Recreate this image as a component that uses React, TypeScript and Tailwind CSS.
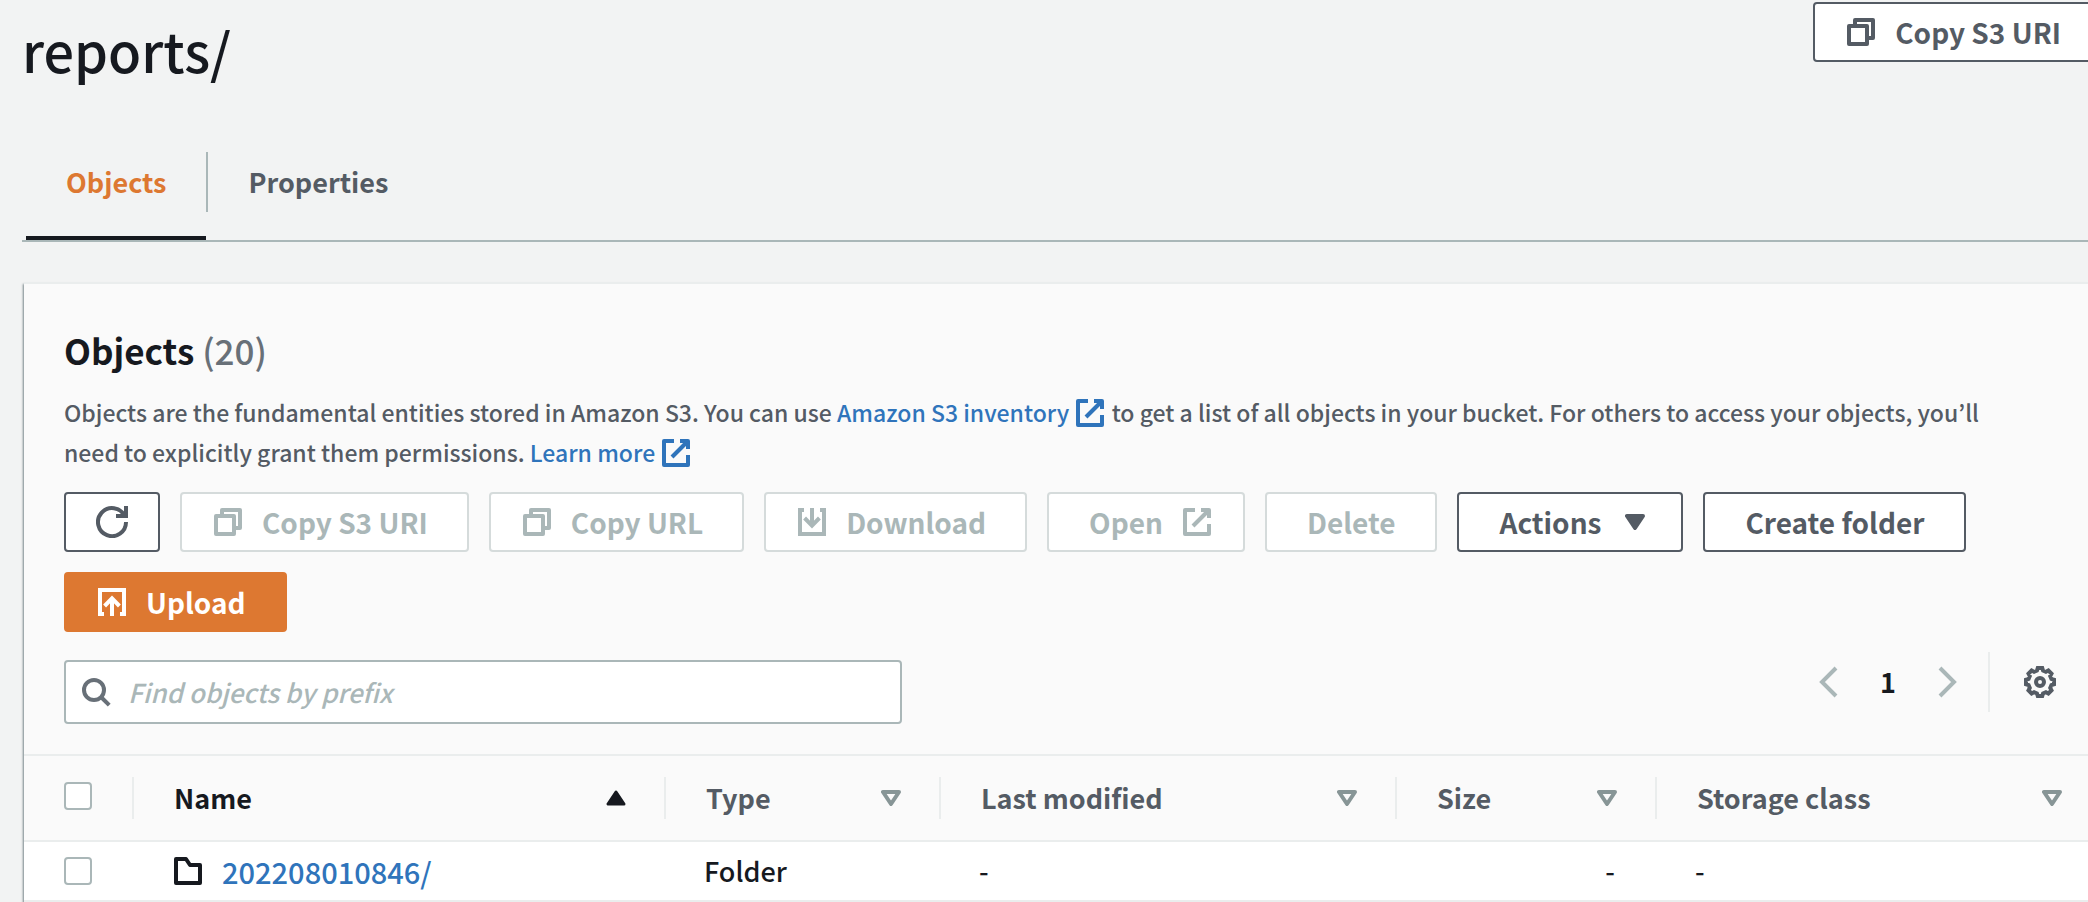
import React from "react";

type IconName = "copy" | "external" | "download" | "upload" | "refresh" | "search" | "prev" | "next" | "folder";

const iconPaths: Record<IconName, string[]> = {
  copy: ["M2 5h9v9H2z", "M5 5V2h9v9h-3"],
  external: ["M10 2h4v4", "M6 10l8-8", "M14 9v5H2V2h5"],
  download: ["M4 2H2v12h12V2h-2", "M8 1v9", "M4.3 6 8 9.8 11.7 6"],
  upload: ["M4 14H2V2h12v12h-2", "M8 15V6", "M4.3 10 8 6.2l3.7 3.8"],
  refresh: ["M10 5h5V0", "M15 8a7 7 0 1 1-.7-3"],
  search: ["M12 7A5 5 0 1 1 2 7a5 5 0 0 1 10 0z", "M10.5 10.5 14.6 14.6"],
  prev: ["M12 1 5 8l7 7"],
  next: ["M4 1l7 7-7 7"],
  folder: ["M2 2h5l2 3h5v9H2z"],
};

function Icon({ name, className = "" }: { name: IconName; className?: string }) {
  const round = name === "copy" || name === "folder" || name === "external";
  return (
    <svg
      viewBox="0 0 16 16"
      aria-hidden="true"
      fill="none"
      stroke="currentColor"
      strokeWidth="2"
      strokeLinejoin={round ? "round" : "miter"}
      className={`size-8 shrink-0 ${className}`}
    >
      {iconPaths[name].map((d) => (
        <path key={d} d={d} />
      ))}
    </svg>
  );
}

function Caret({ kind }: { kind: "menu" | "asc" | "none" }) {
  return (
    <svg viewBox="0 0 20 16" aria-hidden="true" strokeLinejoin="round" className="h-4 w-5 shrink-0">
      {kind === "menu" && <path d="M2 2h16l-8 12z" fill="currentColor" stroke="currentColor" strokeWidth="4" />}
      {kind === "asc" && <path d="M2 14h16L10 2z" fill="currentColor" stroke="currentColor" strokeWidth="3" />}
      {kind === "none" && <path d="M2 2h16l-8 12z" fill="none" stroke="#879596" strokeWidth="4" />}
    </svg>
  );
}

// Eight teeth, each a tip edge followed by a valley edge.
const gearPoints = Array.from({ length: 8 }, (_, i) => {
  const corner = (deg: number, r: number) => {
    const a = ((i * 45 + deg) * Math.PI) / 180;
    return `${(16 + r * Math.sin(a)).toFixed(2)},${(16 - r * Math.cos(a)).toFixed(2)}`;
  };
  return [corner(-9, 14.2), corner(9, 14.2), corner(15, 11.8), corner(30, 11.8)].join(" ");
}).join(" ");

function Gear() {
  return (
    <svg viewBox="0 0 32 32" aria-hidden="true" fill="none" stroke="currentColor" strokeWidth="4" className="size-8">
      <polygon points={gearPoints} />
      <circle cx="16" cy="16" r="4" />
    </svg>
  );
}

type ButtonProps = {
  children?: React.ReactNode;
  start?: IconName;
  end?: IconName;
  caret?: boolean;
  disabled?: boolean;
  primary?: boolean;
};

function Button({ children, start, end, caret, disabled, primary }: ButtonProps) {
  const tone = primary
    ? "border-[#dd7831] bg-[#dd7831] text-white"
    : disabled
      ? "border-[#d5dbdb] bg-white text-[#aab7b8]"
      : "border-[#545b64] bg-white text-[#545b64]";
  const left = start ? "pl-[30px]" : "pl-10";
  const right = end ? "pr-[30px]" : caret ? "pr-9" : start ? "pr-[39px]" : "pr-10";
  const gap = caret ? "gap-6" : "gap-[18px]";
  return (
    <button
      type="button"
      disabled={disabled}
      className={`flex h-[60px] shrink-0 items-center whitespace-nowrap rounded-sm border-2 text-[28px] leading-10 font-bold ${gap} ${tone} ${left} ${right}`}
    >
      {start && <Icon name={start} />}
      {children}
      {end && <Icon name={end} />}
      {caret && <Caret kind="menu" />}
    </button>
  );
}

const columns = [
  { label: "Name", sort: "asc" as const },
  { label: "Type", sort: "none" as const },
  { label: "Last modified", sort: "none" as const },
  { label: "Size", sort: "none" as const },
  { label: "Storage class", sort: "none" as const },
];

function Checkbox({ label }: { label: string }) {
  return (
    <input
      type="checkbox"
      aria-label={label}
      className="block size-7 appearance-none rounded-sm border-2 border-[#aab7b8] bg-white checked:bg-[#2f74bb]"
    />
  );
}

export default function App() {
  return (
    <div className="min-h-screen overflow-x-hidden bg-[#f2f3f3] font-['Noto_Sans_CJK_KR','Noto_Sans',sans-serif] text-[27px] leading-10 font-medium text-[#16191f]">
      <header className="flex items-start justify-between pt-0.5 pl-[22px]">
        <h1 className="pt-3 text-[54px] leading-[72px]">reports/</h1>
        <div className="-mr-3.5">
          <Button start="copy">Copy S3 URI</Button>
        </div>
      </header>

      <nav className="mt-[66px] ml-[22px] flex border-b-2 border-[#aab7b8] pl-1 font-bold">
        <a href="#objects" className="flex h-[88px] items-start border-b-4 border-[#16191f] px-10 pt-2.5 text-[#dd7831]">
          Objects
        </a>
        <a href="#properties" className="h-[60px] border-l-2 border-[#aab7b8] px-10 pt-2.5 text-[#545b64]">
          Properties
        </a>
      </nav>

      <main className="mt-10 ml-6 border-t-2 border-[#eaeded] bg-[#fafafa] shadow-[-1px_2px_2px_0_rgba(0,28,36,0.5)]">
        <section className="px-10 pt-11">
          <h2 className="text-[35px] leading-[44px] font-bold">
            Objects <span className="font-medium text-[#687078]">(20)</span>
          </h2>
          <p className="mt-5 max-w-[1964px] text-[23px] leading-10 text-[#545b64]">
            Objects are the fundamental entities stored in Amazon S3. You can use{" "}
            <a href="#inventory" className="text-[#2f74bb]">
              Amazon S3 inventory <Icon name="external" className="inline-block align-[-7px]" />
            </a>{" "}
            to get a list of all objects in your bucket. For others to access your objects, you’ll need to explicitly
            grant them permissions.{" "}
            <a href="#learn" className="text-[#2f74bb]">
              Learn more <Icon name="external" className="inline-block align-[-7px]" />
            </a>
          </p>
          <div className="mt-5 flex flex-wrap gap-5">
            <button
              type="button"
              aria-label="Refresh"
              className="flex h-[60px] w-24 items-center justify-center rounded-sm border-2 border-[#545b64] bg-white text-[#545b64]"
            >
              <Icon name="refresh" />
            </button>
            <Button start="copy" disabled>Copy S3 URI</Button>
            <Button start="copy" disabled>Copy URL</Button>
            <Button start="download" disabled>Download</Button>
            <Button end="external" disabled>Open</Button>
            <Button disabled>Delete</Button>
            <Button caret>Actions</Button>
            <Button>Create folder</Button>
            <Button start="upload" primary>Upload</Button>
          </div>
        </section>

        <div className="mt-5 flex items-start justify-between pr-8 pb-[30px] pl-10">
          <label className="mt-2 flex h-16 w-[838px] items-center gap-4 rounded-sm border-2 border-[#aab7b8] bg-white px-3.5">
            <Icon name="search" className="text-[#687078]" />
            <input
              type="text"
              aria-label="Find objects by prefix"
              placeholder="Find objects by prefix"
              className="w-full bg-transparent text-[26px] outline-none placeholder:text-[#aab7b8] placeholder:italic"
            />
          </label>
          <div className="flex h-[60px] items-center">
            <button type="button" aria-label="Previous page" className="text-[#aab7b8]">
              <Icon name="prev" />
            </button>
            <span className="w-[88px] text-center font-bold">1</span>
            <button type="button" aria-label="Next page" className="text-[#aab7b8]">
              <Icon name="next" />
            </button>
            <span className="ml-6 h-[60px] w-0.5 bg-[#eaeded]" />
            <button type="button" aria-label="Preferences" className="ml-[34px] text-[#545b64]">
              <Gear />
            </button>
          </div>
        </div>

        <table className="w-full table-fixed border-collapse">
          <colgroup>
            <col className="w-[108px]" />
            <col className="w-[532px]" />
            <col className="w-[275px]" />
            <col className="w-[456px]" />
            <col className="w-[260px]" />
            <col />
          </colgroup>
          <thead>
            <tr className="h-[86px] border-y-2 border-[#eaeded]">
              <th className="pb-1 pl-10">
                <Checkbox label="Select all objects" />
              </th>
              {columns.map((c) => (
                <th key={c.label} className="p-0 text-left">
                  <div
                    className={`flex h-[42px] items-center justify-between border-l-2 border-[#eaeded] pl-10 ${
                      c.label === "Storage class" ? "pr-[26px]" : "pr-[38px]"
                    } ${c.sort === "asc" ? "" : "text-[#545b64]"}`}
                  >
                    {c.label}
                    <Caret kind={c.sort} />
                  </div>
                </th>
              ))}
            </tr>
          </thead>
          <tbody>
            <tr className="h-[60px] border-b-2 border-[#eaeded] bg-white">
              <td className="pl-10">
                <Checkbox label="Select 202208010846/" />
              </td>
              <td className="pl-10">
                <a href="#folder" className="flex items-center gap-[18px] text-[29px] text-[#2f74bb]">
                  <Icon name="folder" className="text-[#16191f]" />
                  202208010846/
                </a>
              </td>
              <td className="pl-10">Folder</td>
              <td className="pl-10">-</td>
              <td className="pr-10 text-right">-</td>
              <td className="pl-10">-</td>
            </tr>
          </tbody>
        </table>
      </main>
    </div>
  );
}
